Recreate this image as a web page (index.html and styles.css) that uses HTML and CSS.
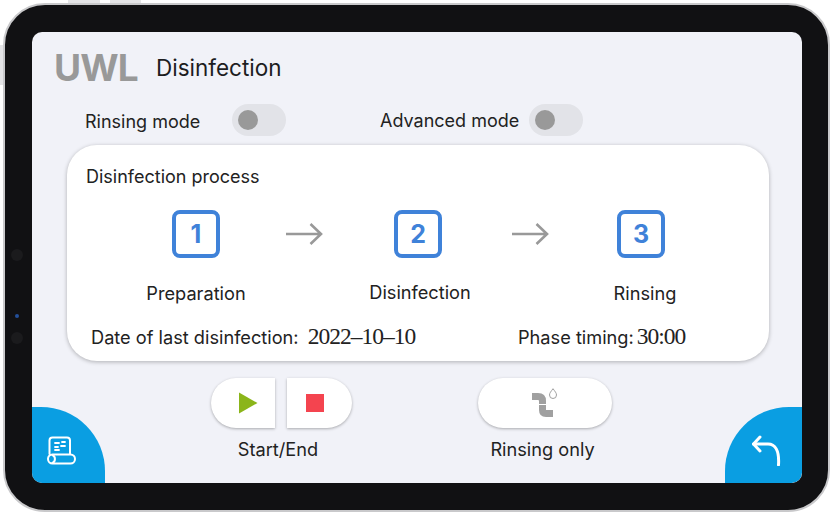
FILE: index.html
```html
<!DOCTYPE html>
<html lang="en">
<head>
  <meta charset="UTF-8">
  <meta name="viewport" content="width=device-width, initial-scale=1.0">
  <title>Disinfection</title>
  <link rel="stylesheet" href="styles.css">
</head>
<body>
  <span class="hw hw-top-a"></span>
  <span class="hw hw-top-b"></span>
  <span class="hw hw-side"></span>

  <div class="device">
    <span class="lens lens-a"></span>
    <span class="lens lens-led"></span>
    <span class="lens lens-b"></span>

    <div class="screen">
      <header class="header">
        <div class="logo">UWL</div>
        <h1>Disinfection</h1>
      </header>

      <div class="modes">
        <div class="mode mode-rinse">
          <span>Rinsing mode</span>
          <span class="switch"><span class="knob"></span></span>
        </div>
        <div class="mode mode-advanced">
          <span>Advanced mode</span>
          <span class="switch"><span class="knob"></span></span>
        </div>
      </div>

      <section class="card">
        <div class="card-title">Disinfection process</div>

        <div class="steps">
          <div class="step">
            <div class="step-num">1</div>
            <div class="step-label">Preparation</div>
          </div>
          <svg class="arrow arrow-first" viewBox="0 0 37 24"><path d="M0 12H35M24.500 2 35 12 24.500 22"/></svg>
          <div class="step">
            <div class="step-num">2</div>
            <div class="step-label step-label-mid">Disinfection</div>
          </div>
          <svg class="arrow" viewBox="0 0 37 24"><path d="M0 12H35M24.500 2 35 12 24.500 22"/></svg>
          <div class="step">
            <div class="step-num">3</div>
            <div class="step-label step-label-last">Rinsing</div>
          </div>
        </div>

        <div class="info">
          <div class="info-date">Date of last disinfection: <span class="digits">2022–10–10</span></div>
          <div class="info-time">Phase timing:<span class="digits">30:00</span></div>
        </div>
      </section>

      <div class="controls">
        <div class="control control-run">
          <div class="control-btns">
            <button class="btn btn-start">
              <svg width="20" height="22" viewBox="0 0 20 22"><path d="M1 0.5 19.5 11 1 21.5Z" fill="#8bb51a"/></svg>
            </button>
            <button class="btn btn-stop">
              <span class="stop-square"></span>
            </button>
          </div>
          <div class="control-label">Start/End</div>
        </div>
        <div class="control control-rinse">
          <button class="btn btn-wide">
            <svg width="26" height="30" viewBox="0 0 26 30">
              <path d="M0 8.5H6Q10.5 8.5 10.5 13V22Q10.5 25.5 14 25.5H21" fill="none" stroke="#a0a0a0" stroke-width="7"/>
              <path d="M6 16.5H15" stroke="#fff" stroke-width="1"/>
              <path d="M21 .7C19 3.5 17.5 5 17.5 7A3.5 3.5 0 0 0 24.5 7C24.5 5 23 3.5 21 .7Z" fill="none" stroke="#a0a0a0" stroke-width="1"/>
            </svg>
          </button>
          <div class="control-label control-label-rinse">Rinsing only</div>
        </div>
      </div>

      <button class="corner corner-left">
        <svg width="30" height="31" viewBox="0 0 30 31" fill="none" stroke="#fff" stroke-width="2" stroke-linejoin="round" stroke-linecap="round">
          <path d="M3.5 18V4.5A3 3 0 0 1 6.500 1.500H21A3 3 0 0 1 24 4.500V18"/>
          <rect x="2" y="18.500" width="27" height="9" rx="4.500"/>
          <path d="M6.500 19A4.500 4.500 0 0 1 6.500 27"/>
          <path d="M9 7H13M16 6H19M9 11H12M15 10H19M9 14H13" stroke-width="1.800"/>
        </svg>
      </button>
      <button class="corner corner-right">
        <svg width="32" height="32" viewBox="0 0 32 32" fill="none" stroke="#fff" stroke-width="3" stroke-linecap="round" stroke-linejoin="round">
          <path d="M8 3 1.500 10 8 17"/>
          <path d="M1.500 10H16C23 10 27.500 16 26.500 31"/>
        </svg>
      </button>
    </div>
  </div>
</body>
</html>
```

FILE: styles.css
```css
* {
  box-sizing: border-box;
}

body {
  margin: 0;
  width: 833px;
  height: 514px;
  overflow: hidden;
  background: #fff;
  font-family: Inter, "Noto Sans", sans-serif;
  color: #222;
  position: relative;
}

button {
  border: none;
  padding: 0;
  cursor: pointer;
  font: inherit;
}

/* tablet frame */
.device {
  position: relative;
  width: 827px;
  height: 509px;
  margin: 3px 0 0 3px;
  padding: 27px 26px 27px 27px;
  background: #111113;
  border: 2px solid #c9c9cb;
  border-radius: 42px;
}

.hw {
  position: absolute;
  background: #e4e4e6;
}

.hw-top-a {
  left: 68px;
  top: 0;
  width: 32px;
  height: 3px;
}

.hw-top-b {
  left: 110px;
  top: 0;
  width: 31px;
  height: 3px;
}

.hw-side {
  left: 0;
  top: 45px;
  width: 3px;
  height: 40px;
}

.lens {
  position: absolute;
  left: 6px;
  width: 12px;
  height: 12px;
  border-radius: 50%;
  background: #1b1b1d;
}

.lens-a {
  top: 244px;
}

.lens-b {
  top: 327px;
}

.lens-led {
  left: 10px;
  top: 309px;
  width: 4px;
  height: 4px;
  background: #24509a;
}

.screen {
  position: relative;
  height: 451px;
  background: #f1f2f8;
  border-radius: 10px;
  overflow: hidden;
}

/* header */
.header {
  display: flex;
  align-items: center;
  height: 70px;
  margin-bottom: 2px;
  padding-left: 22px;
}

.logo {
  width: 102px;
  font-size: 37px;
  font-weight: 700;
  letter-spacing: -0.8px;
  color: #999;
}

h1 {
  margin: 0;
  font-size: 22.5px;
  font-weight: 400;
  color: #1d1d1f;
}

/* mode switches */
.modes {
  display: flex;
  height: 41px;
  font-size: 18px;
}

.mode {
  display: flex;
  align-items: center;
  height: 32px;
}

.mode-rinse {
  width: 295px;
  padding-left: 53px;
  gap: 32px;
}

.mode-rinse > span:first-child {
  margin-top: 2px;
}

.mode-advanced {
  padding-left: 53px;
  gap: 10px;
}

.switch {
  display: block;
  width: 54px;
  height: 32px;
  padding: 6px;
  border-radius: 16px;
  background: #e2e3e8;
}

.knob {
  display: block;
  width: 20px;
  height: 20px;
  border-radius: 50%;
  background: #999;
}

/* process card */
.card {
  width: 702px;
  height: 216px;
  margin-left: 35px;
  padding: 21px 0 0 19px;
  background: #fff;
  border-radius: 30px;
  box-shadow: 0 1px 4px rgba(0, 0, 0, 0.28);
}

.card-title {
  font-size: 18px;
  line-height: 22px;
}

.steps {
  display: flex;
  align-items: flex-start;
  height: 112px;
  margin: 22px 0 0 45px;
}

.step {
  width: 130px;
  display: flex;
  flex-direction: column;
  align-items: center;
}

.step-num {
  width: 48px;
  height: 48px;
  border: 4px solid #3f82d9;
  border-radius: 8px;
  display: flex;
  align-items: center;
  justify-content: center;
  color: #3f82d9;
  font-size: 25px;
  font-weight: 700;
}

.step-label {
  margin-top: 24px;
  font-size: 18.2px;
  line-height: 22px;
  white-space: nowrap;
}

.step-label-mid {
  margin: 23px 0 0 4px;
}

.step-label-last {
  margin-left: 8px;
}

.arrow {
  flex: none;
  width: 37px;
  height: 24px;
  margin: 12px 27px 0 29px;
  fill: none;
  stroke: #999;
  stroke-width: 2.6;
}

.arrow-first {
  margin: 12px 30px 0 25px;
}

.info {
  display: flex;
  align-items: center;
  height: 28px;
  margin-left: 5px;
  font-size: 18.2px;
  white-space: nowrap;
}

.info-date {
  width: 427px;
}

.digits {
  font-family: "Liberation Serif", serif;
  font-size: 23.5px;
  letter-spacing: -1px;
  margin-left: 4px;
}

.info-time .digits {
  margin-left: 3px;
}

/* bottom buttons */
.controls {
  display: flex;
  margin-top: 17px;
}

.control {
  display: flex;
  flex-direction: column;
  align-items: center;
}

.control-run {
  width: 141px;
  margin-left: 179px;
}

.control-rinse {
  width: 134px;
  margin-left: 126px;
}

.control-btns {
  display: flex;
  gap: 12px;
}

.btn {
  height: 50px;
  background: #fff;
  box-shadow: 0 1px 3px rgba(0, 0, 0, 0.3);
  display: flex;
  align-items: center;
  justify-content: center;
}

.btn-start {
  width: 64px;
  padding-left: 9px;
  border-radius: 25px 0 0 25px;
}

.btn-stop {
  width: 65px;
  padding-right: 9px;
  border-radius: 0 25px 25px 0;
}

.stop-square {
  display: block;
  width: 18px;
  height: 18px;
  background: #f4444f;
}

.btn-wide {
  width: 134px;
  border-radius: 25px;
}

.control-label {
  margin: 10px 7px 0 0;
  font-size: 18.2px;
  line-height: 22px;
  white-space: nowrap;
}

.control-label-rinse {
  margin-right: 5px;
}

/* corner tabs */
.corner {
  position: absolute;
  bottom: 0;
  height: 76px;
  background: #0a9ee2;
}

.corner-left {
  left: 0;
  width: 73px;
  padding: 13px 0 0 14px;
  border-radius: 0 64px 0 0;
  text-align: left;
}

.corner-right {
  right: 0;
  width: 77px;
  padding: 10px 0 0 27px;
  border-radius: 64px 0 10px 0;
}

.corner svg {
  display: block;
}
```
